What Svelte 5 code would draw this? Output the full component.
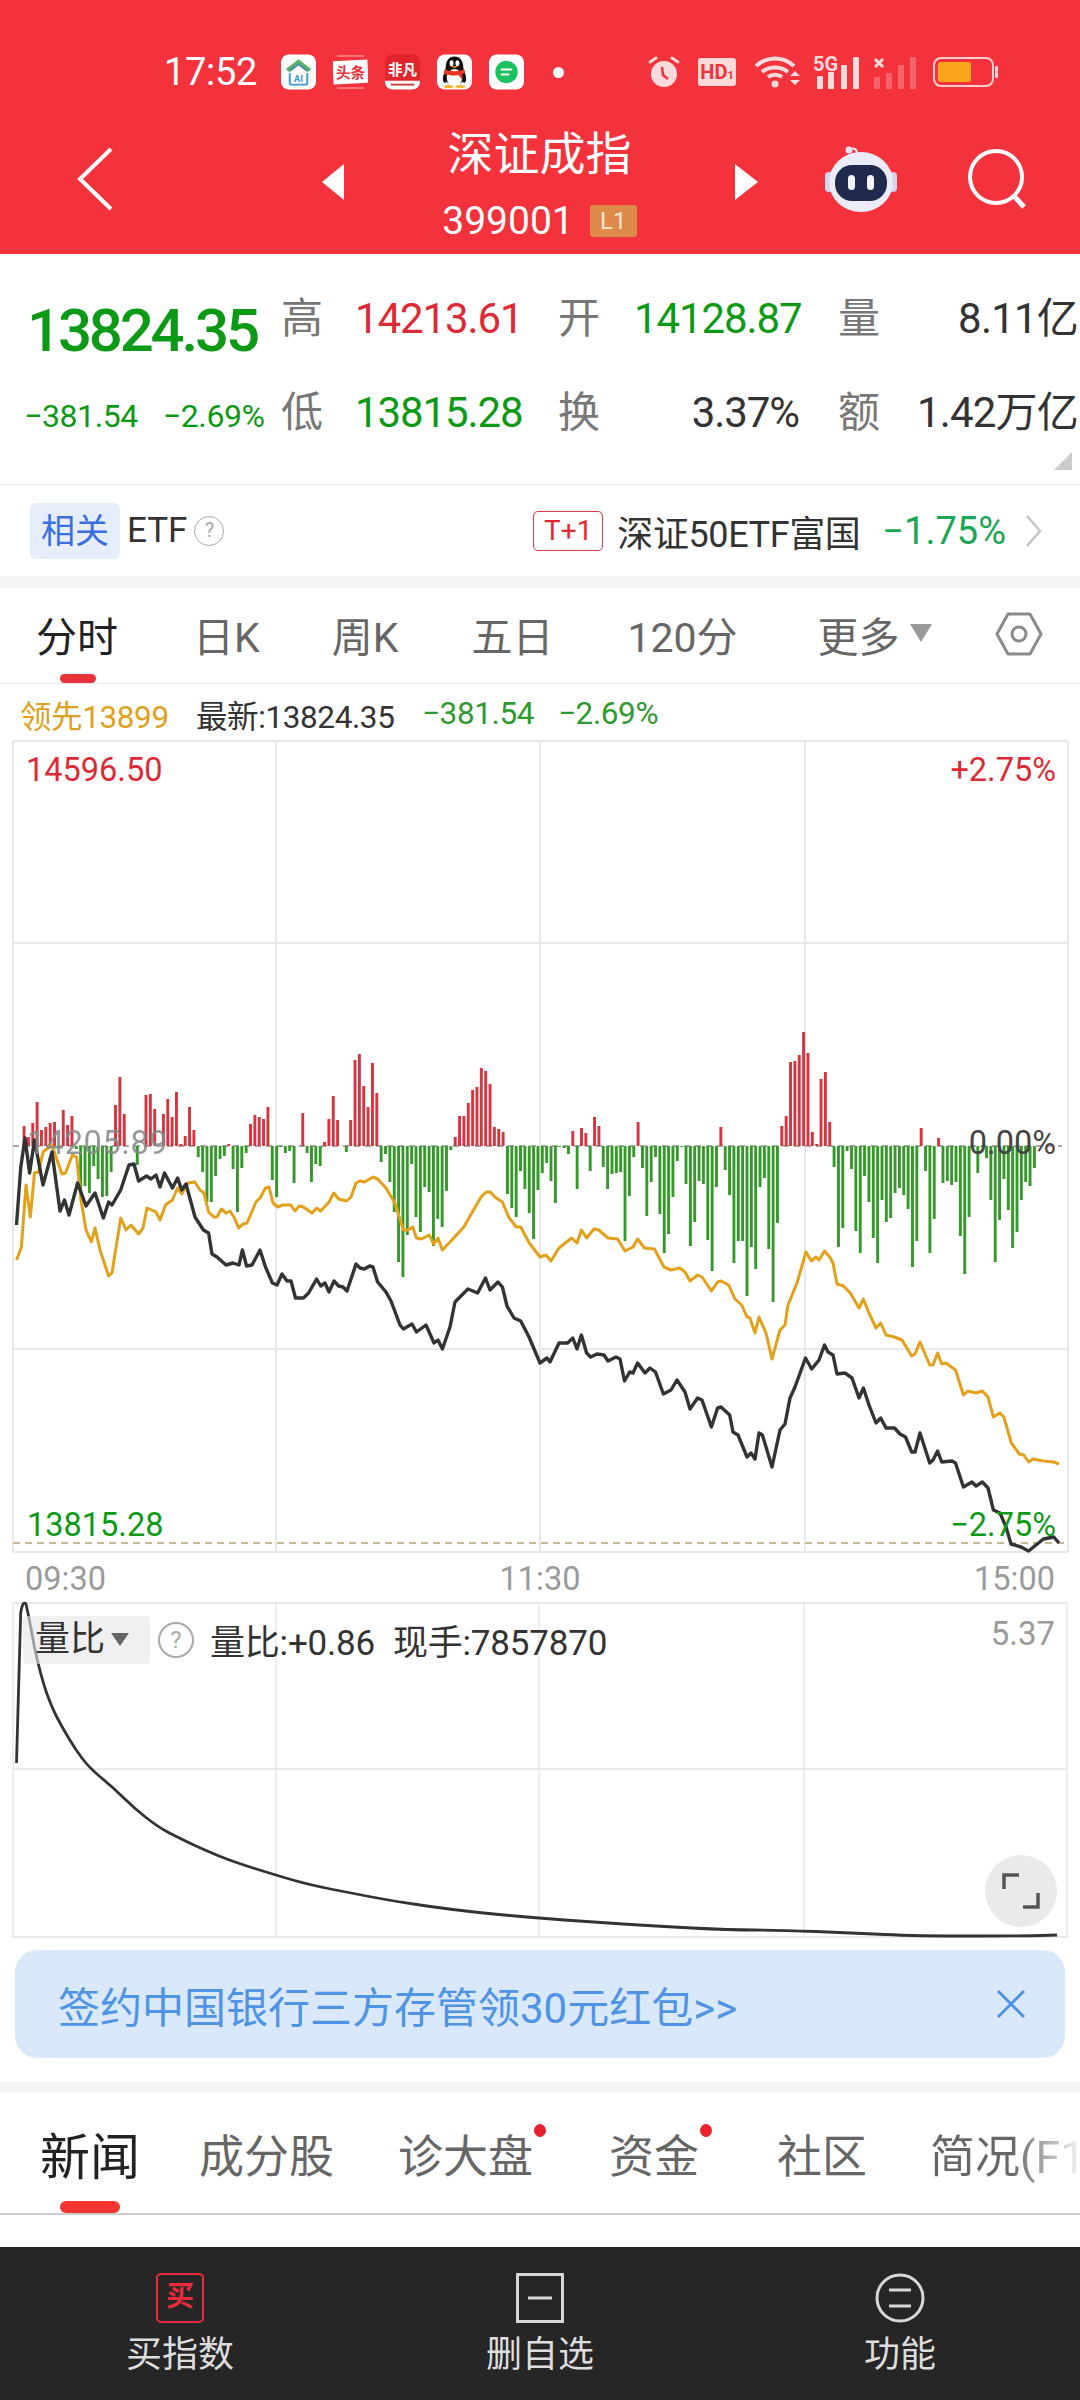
<script>
  // chart paths are in page px, the svg viewBox keeps the same numbers
  const black = [16.5,1225,20.7,1168,25,1138,29.6,1173,34.5,1140,43,1185,52,1152,60,1211,64.5,1200,69,1215,77.6,1183,86,1206,95,1193,103.4,1218,108.6,1202,112,1205,120.7,1190,129,1165,134,1164,138.6,1181,146.6,1176,151,1179,156,1175,160,1187,164.5,1173,172.4,1188,177.6,1178,181.7,1190,186,1184,195,1217,203.4,1230,208.6,1233,212,1254,217,1257,226,1265,233,1263,239,1265,242.4,1250,246.6,1266,252,1265,260,1250,265.5,1267,272.4,1283,277,1285,282,1274,287,1281,291,1281,295.5,1298,303.4,1298,308.6,1293,316.6,1279,320.7,1286,325,1283,329,1292,334,1281,338.6,1286,343,1287,347,1291,356,1264,360,1268,364.5,1269,369.6,1266,373,1267,377.6,1282,386,1292,391,1301,400,1325,403.4,1329,412,1324,416.5,1332,426,1325,434,1343,438,1340,442.4,1349,450,1327,455,1302,460,1297,468,1289,477.6,1293,485.5,1278,490,1290,498,1282,502.4,1287,507,1306,514,1318,520.7,1321,529,1337,540,1363,547,1358,550,1362,559,1343,567.6,1343,572.8,1338,577,1349,581.4,1335,586.6,1353,590.7,1357,597,1354,604,1355,608,1361,616,1357,620,1359,624.5,1381,629.7,1372,633,1373,637.6,1363,645,1373,650,1368,655.5,1372,663.4,1394,671,1390,677,1380,685,1392,690,1409,697.6,1398,702,1400,711.4,1427,717.6,1408,721,1407,729.7,1415,733,1432,738,1435,747,1457,751,1453,755,1459,759,1433,762.4,1435,772,1467,780,1430,785,1424,790,1398,795,1387,805.5,1358,811.7,1369,819,1360,824.5,1345,828,1352,833,1355,837,1374,845,1373,852,1378,859,1398,863.4,1388,869,1405,876,1423,880.7,1418,886,1428,894.5,1428,900,1434,905.5,1437,911.7,1452,915,1452,920,1433,929.7,1463,933,1460,937.6,1451,941.7,1462,952,1461,955.5,1463,963.4,1487,972,1482,976,1486,982.4,1482,988,1488,993.4,1510,1000,1513,1006,1527,1011,1544,1021,1547,1028.6,1551,1034.8,1546,1043.4,1539,1053.8,1537,1059,1543];
  const orange = [16.5,1260,21.4,1247,26,1185,30.3,1217,34.5,1173,38.6,1172,43,1152,52,1145,57,1160,62,1174,65.5,1173,72.4,1155,76.6,1157,81,1200,86,1230,91.4,1242,95,1228,100,1250,108.6,1276,112,1273,120.7,1218,126,1230,131,1225,138.6,1234,143,1228,147,1208,156,1212,160,1220,165.5,1205,172.4,1200,177.6,1188,181.7,1194,188,1183,194.8,1182,200,1190,204,1193,208.6,1212,213.8,1217,217,1217,221.4,1209,226,1213,230,1211,234.5,1218,238.6,1228,243,1224,247,1223,256,1202,260,1198,265.5,1188,269,1187,273,1203,277.6,1207,282.8,1205,290.7,1205,295,1211,299.3,1206,303.4,1207,312,1213,316.6,1208,320.7,1211,329,1202,333.8,1193,338.6,1199,346.6,1201,351,1197,356,1183,360,1181,364.5,1182,373,1177,377.6,1179,386,1188,394.8,1203,403.4,1230,408,1230,412.8,1227,416.5,1238,421.4,1239,429.3,1235,433.8,1244,438,1238,442.4,1250,450,1242,463.8,1227,481,1197,486.2,1192,490.3,1192,494.8,1197,502.4,1202,508.6,1217,516.2,1227,520.7,1227,529.3,1243,540,1257,546,1255,551,1261,559,1248,571.7,1238,577,1243,581.4,1230,586.6,1238,594,1229,598.6,1230,608,1238,617.6,1239,625,1251,633,1247,637.6,1239,644.5,1248,654.5,1249,664,1267,671,1270,679.7,1268,685,1272,690,1281,697.6,1275,702,1277,711.4,1291,717.6,1282,721,1281,728.6,1285,735,1299,741.7,1305,747,1317,750,1318,755,1333,759,1317,766,1333,772,1359,780,1330,785,1325,788,1305,797,1283,806,1252,811.4,1261,816,1257,819,1260,824.5,1251,829.7,1257,833,1263,837,1284,843.4,1286,850.3,1293,859,1308,863.4,1299,869,1313,876,1328,880.7,1323,886,1335,894.5,1337,902,1340,911.7,1356,915,1354,920,1342,929.7,1365,933,1365,937.6,1353,941.7,1364,946,1363,955.5,1370,963.4,1395,967.6,1391,976,1393,982.4,1391,988,1397,993.4,1417,1000,1413,1003.8,1417,1011.4,1443,1019.3,1454,1023.8,1455,1028.6,1462,1033,1459,1043.4,1461,1053.8,1462,1059,1464];
  const ratio = [34.4,1647,41,1677,51.6,1707,62,1727,75.8,1750,89.5,1768,113.6,1788,134,1808,158,1827,179,1838,206.6,1851,234,1862,275.5,1875,310,1885,351,1893,392.5,1901,440.8,1908,482,1913,537,1918,592,1922,654,1926,730,1930,778,1930,854,1933,916,1936,1026,1936,1057,1935];
  // signed bar heights in px from the zero line, one per minute
  const bars = [20,9,23,44,16,19,23,24,-2,36,21,30,-3,-47,-40,-47,-20,-33,-51,-50,-26,41,69,32,0,0,-19,0,51,52,37,0,32,47,29,54,2,10,39,16,-11,-26,-56,-56,-30,-13,-10,2,-23,-66,-22,-7,22,31,29,27,39,-34,-51,-1,-7,-5,-37,0,33,-7,-36,-18,-20,4,27,50,26,0,-6,26,86,92,60,39,83,53,-16,-8,-36,-66,-116,-131,-89,-18,-71,-86,-41,-46,-100,-73,-81,-45,-4,9,30,30,43,56,59,78,75,62,19,17,14,-48,-62,-71,-25,-43,-67,-93,-44,-27,-17,-35,-57,-1,-2,-8,15,-43,18,13,-25,29,20,-21,-43,-28,-27,-26,-95,-50,-11,24,-22,-70,-36,-11,-68,-107,-88,-51,-15,-1,-38,-100,-76,-35,-38,-94,-125,-41,19,-24,-49,-117,-95,-95,-150,-101,-123,-41,-32,-103,-156,-77,20,30,84,85,91,114,93,14,2,67,74,24,-21,-101,-82,-5,-23,-85,-107,-30,-56,-92,-117,-54,-76,-72,-47,-42,-49,-63,-121,-95,18,-25,-107,-73,8,-37,-35,-39,-36,-90,-128,-71,-1,-27,-1,-12,-54,-116,-74,-33,-64,-102,-86,-54,-36,-40,-22];
  const zero = 1146;
  const pts = (a) => {
    let s = '';
    for (let i = 0; i < a.length; i += 2) s += a[i] + ',' + a[i + 1] + ' ';
    return s;
  };
  // the ratio curve is smooth, so run it through the midpoints
  const smooth = (a) => {
    let d = 'M16.5 1763L20.7 1613Q22.7 1600 26 1604Q30 1622 ' + a[0] + ' ' + a[1];
    for (let i = 2; i < a.length - 2; i += 2) {
      const mx = (a[i] + a[i + 2]) / 2;
      const my = (a[i + 1] + a[i + 3]) / 2;
      d += 'Q' + a[i] + ' ' + a[i + 1] + ' ' + mx + ' ' + my;
    }
    return d + 'L1057 1935';
  };
  const gridX = [13, 276, 540, 805, 1068];
  const gridY = [741, 943, 1349, 1552];
  const ratioX = [13, 276, 539, 804, 1067];
  const appTabs = ['日K', '周K', '五日', '120分'];
</script>

<div class="page">
  <header class="head">
    <div class="status">
      <span class="time">17:52</span>
      <div class="apps">
        <svg class="app" viewBox="0 0 36 36">
          <rect width="36" height="36" rx="8" fill="#fff" />
          <path d="M5 15 L18 5 L31 15 L28 18 L18 10 L8 18Z" fill="#58b368" />
          <path d="M9 17 L18 10 L27 17" fill="none" stroke="#4a8fb0" stroke-width="2" />
          <path d="M9 19v10a2 2 0 0 0 2 2h14a2 2 0 0 0 2-2V19" fill="none" stroke="#3f9bd0" stroke-width="2" />
          <text x="18" y="28" class="ai">AI</text>
        </svg>
        <svg class="app" viewBox="0 0 36 36">
          <rect width="36" height="36" rx="8" fill="#f3323b" />
          <rect x="0" y="6" width="36" height="24" fill="#fff" transform="rotate(-3 18 18)" />
          <rect x="4" y="1" width="28" height="1" fill="#fbb" />
          <rect x="4" y="34" width="28" height="1" fill="#fbb" />
          <text x="18" y="24" class="tt">头条</text>
        </svg>
        <svg class="app" viewBox="0 0 36 36">
          <rect width="36" height="36" rx="8" fill="#e0262c" />
          <path d="M0 27h36v1a8 8 0 0 1-8 8H8a8 8 0 0 1-8-8z" fill="#fff" />
          <text x="18" y="21" class="fc">非凡</text>
          <rect x="6" y="30" width="24" height="2" fill="#c44" />
        </svg>
        <svg class="app" viewBox="0 0 36 36">
          <rect width="36" height="36" rx="8" fill="#fff" />
          <path d="M18 2c-6 0-9 5-9 11 0 3-3 7-3 12 0 4 2 5 4 3 2 4 14 4 16 0 2 2 4 1 4-3 0-5-3-9-3-12 0-6-3-11-9-11z" fill="#111" />
          <ellipse cx="18" cy="24" rx="8" ry="9" fill="#fff" />
          <path d="M8 15c5 3 15 3 20 0l1 4-3 1v6l-4-5c-4 1-8 1-12-1l-3 1z" fill="#e32" />
          <ellipse cx="15" cy="9" rx="2" ry="3" fill="#fff" />
          <ellipse cx="21" cy="9" rx="2" ry="3" fill="#fff" />
          <path d="M14 12h8l-4 2z" fill="#fa0" />
          <ellipse cx="12" cy="33" rx="5" ry="1.6" fill="#f5b52e" />
          <ellipse cx="24" cy="33" rx="5" ry="1.6" fill="#f5b52e" />
        </svg>
        <svg class="app" viewBox="0 0 36 36">
          <rect width="36" height="36" rx="8" fill="#fff" />
          <circle cx="18" cy="18" r="11.5" fill="#1cc25e" />
          <rect x="12" y="14.5" width="12" height="2" rx="1" fill="#fff" />
          <rect x="12" y="19.5" width="9" height="2" rx="1" fill="#fff" />
        </svg>
      </div>
      <span class="dot"></span>
      <div class="sys">
        <svg width="34" height="34" viewBox="0 0 34 34">
          <circle cx="17" cy="19" r="13" fill="#fcd9da" />
          <path d="M3 7l6-4M31 7l-6-4" stroke="#fcd9da" stroke-width="3" stroke-linecap="round" />
          <path d="M15 12l1 8 5 4" fill="none" stroke="#f3323b" stroke-width="2.5" />
        </svg>
        <div class="hd"><b>HD</b><small>1</small></div>
        <svg class="wifi" width="46" height="32" viewBox="0 0 46 32">
          <path d="M1 10C12 0 28 0 39 10M7 16c7-6 19-6 26 0M13 21c4-3 10-3 14 0" fill="none" stroke="#fcd9da" stroke-width="4" />
          <circle cx="20" cy="28" r="3.5" fill="#fcd9da" />
          <path d="M35 20l5 -5 5 5zM35 24l5 5 5-5z" fill="#fcd9da" />
        </svg>
        <svg class="sig" width="48" height="33" viewBox="0 0 48 33">
          <text x="0" y="15" class="fiveg">5G</text>
          <rect x="4" y="20" width="6" height="13" rx="1" fill="#fcd9da" />
          <rect x="15" y="16" width="6" height="17" rx="1" fill="#fcd9da" />
          <rect x="28" y="9" width="6" height="24" rx="1" fill="#fcd9da" />
          <rect x="40" y="1" width="6" height="32" rx="1" fill="#fcd9da" />
        </svg>
        <svg width="44" height="33" viewBox="0 0 44 33">
          <path d="M2 3l8 8M10 3l-8 8" stroke="#fcd9da" stroke-width="3" />
          <g fill="#fcd9da" opacity="0.3">
            <rect x="1" y="21" width="6" height="12" />
            <rect x="13" y="17" width="6" height="16" />
            <rect x="25" y="9" width="6" height="24" />
            <rect x="37" y="1" width="6" height="32" />
          </g>
        </svg>
        <svg class="batt" width="66" height="30" viewBox="0 0 66 30">
          <rect x="1" y="1" width="59" height="28" rx="7" fill="none" stroke="#fcd0d2" stroke-width="2" />
          <rect x="5" y="5" width="33" height="20" rx="3" fill="#fba61b" />
          <rect x="62" y="9" width="3" height="12" rx="1" fill="#fcd0d2" />
        </svg>
      </div>
    </div>
    <div class="nav">
      <svg class="back" width="36" height="64" viewBox="0 0 36 64">
        <path d="M34 2L3 32l31 30" fill="none" stroke="#fff" stroke-width="4" />
      </svg>
      <span class="tri left"></span>
      <div class="name">
        <div class="title">深证成指</div>
        <div class="code"><span>399001</span><span class="l1">L1</span></div>
      </div>
      <span class="tri right"></span>
      <svg class="robot" width="72" height="68" viewBox="0 0 72 68">
        <path d="M25 6c2-4 7-3 7 3" fill="none" stroke="#eee" stroke-width="2" />
        <circle cx="24" cy="5" r="3.5" fill="#e6e3f2" />
        <rect x="0" y="27" width="8" height="20" rx="4" fill="#d5d3ee" />
        <rect x="64" y="27" width="8" height="20" rx="4" fill="#d5d3ee" />
        <ellipse cx="36" cy="37" rx="32" ry="30" fill="#ecebf9" />
        <rect x="10" y="20" width="52" height="36" rx="17" fill="#1f2a4d" />
        <rect x="23" y="30" width="7" height="15" rx="3.5" fill="#f2f4fb" />
        <rect x="42" y="30" width="7" height="15" rx="3.5" fill="#f2f4fb" />
      </svg>
      <svg class="search" width="60" height="62" viewBox="0 0 60 62">
        <circle cx="28" cy="29" r="26" fill="none" stroke="#fff" stroke-width="4" />
        <path d="M46 48l10 11" stroke="#fff" stroke-width="5" />
      </svg>
    </div>
  </header>

  <section class="quote">
    <div class="main">
      <div class="price">13824.35</div>
      <div class="delta"><span>−381.54</span><span>−2.69%</span></div>
    </div>
    <div class="stats">
      <span class="k">高</span><span class="v red">14213.61</span>
      <span class="k">开</span><span class="v green r">14128.87</span>
      <span class="k">量</span><span class="v r">8.11亿</span>
      <span class="k">低</span><span class="v green">13815.28</span>
      <span class="k">换</span><span class="v r">3.37%</span>
      <span class="k">额</span><span class="v r">1.42万亿</span>
    </div>
    <span class="corner"></span>
  </section>

  <section class="etf">
    <span class="rel">相关</span>
    <span class="etf-name">ETF</span>
    <span class="help">?</span>
    <span class="t1">T+1</span>
    <span class="fund">深证50ETF富国</span>
    <span class="chg">−1.75%</span>
    <svg width="18" height="34" viewBox="0 0 18 34">
      <path d="M2 2l13 15L2 32" fill="none" stroke="#c4c4c4" stroke-width="2.5" />
    </svg>
  </section>

  <div class="gap"></div>

  <nav class="periods">
    <span class="on">分时</span>
    {#each appTabs as t}
      <span>{t}</span>
    {/each}
    <span class="more">更多<i></i></span>
    <svg class="gear" width="48" height="46" viewBox="0 0 48 46">
      <path d="M13 3h22l11 20-11 20H13L2 23z" fill="none" stroke="#8a8a8a" stroke-width="3" stroke-linejoin="round" />
      <circle cx="24" cy="23" r="7" fill="none" stroke="#8a8a8a" stroke-width="3" />
    </svg>
  </nav>

  <div class="info">
    <span class="lead">领先13899</span>
    <span class="now">最新:13824.35</span>
    <span class="green">−381.54</span>
    <span class="green">−2.69%</span>
  </div>

  <svg class="chart" width="1080" height="865" viewBox="0 735 1080 865">
    {#each gridX as x}
      <line x1={x} x2={x} y1="741" y2="1552" class="grid" />
    {/each}
    {#each gridY as y}
      <line x1="13" x2="1068" y1={y} y2={y} class="grid" />
    {/each}
    <line x1="13" x2="1062" y1={zero} y2={zero} class="zero" />
    <line x1="13" x2="1068" y1="1543" y2="1543" class="floor" />
    {#each bars as h, i}
      {#if h !== 0}
        <rect
          x={22.6 + i * 4.355}
          y={h > 0 ? zero - h : zero}
          width="2.9"
          height={Math.abs(h)}
          fill={h > 0 ? '#d8343f' : '#35992a'}
        />
      {/if}
    {/each}
    <polyline points={pts(orange)} class="l-orange" />
    <polyline points={pts(black)} class="l-black" />
    <text x="26" y="781" class="t c-red">14596.50</text>
    <text x="1056" y="781" class="t c-red end">+2.75%</text>
    <text x="27" y="1154" class="t pre">14205.89</text>
    <text x="1056" y="1154" class="t c-zero end">0.00%</text>
    <text x="27" y="1536" class="t c-green">13815.28</text>
    <text x="1056" y="1536" class="t c-green end">−2.75%</text>
    <text x="25" y="1590" class="t c-time">09:30</text>
    <text x="540" y="1590" class="t c-time mid">11:30</text>
    <text x="1055" y="1590" class="t c-time end">15:00</text>
  </svg>

  <div class="ratio">
    <svg width="1080" height="345" viewBox="0 1600 1080 345">
      {#each ratioX as x}
        <line x1={x} x2={x} y1="1603" y2="1937" class="grid thin" />
      {/each}
      <line x1="13" x2="1068" y1="1603" y2="1603" class="grid" />
      <line x1="13" x2="1068" y1="1769" y2="1769" class="grid" />
      <line x1="13" x2="1068" y1="1937" y2="1937" class="grid" />
      <path d={smooth(ratio)} class="l-ratio" />
    </svg>
    <div class="ratio-bar">
      <span class="pick">量比<i></i></span>
      <span class="help big">?</span>
      <span class="val">量比:+0.86</span>
      <span class="val">现手:7857870</span>
    </div>
    <span class="max">5.37</span>
    <button class="expand" aria-label="全屏">
      <svg width="38" height="38" viewBox="0 0 38 38">
        <path d="M2 17V3h15M36 21v14H21" fill="none" stroke="#555" stroke-width="3.5" />
      </svg>
    </button>
  </div>

  <div class="banner">
    <span>签约中国银行三方存管领30元红包&gt;&gt;</span>
    <svg width="30" height="30" viewBox="0 0 30 30">
      <path d="M2 2l26 26M28 2L2 28" stroke="#4f94e4" stroke-width="3" />
    </svg>
  </div>

  <div class="gap2"></div>

  <nav class="news">
    <span class="on">新闻</span>
    <span>成分股</span>
    <span class="badge">诊大盘</span>
    <span class="badge">资金</span>
    <span>社区</span>
    <span class="fade">简况(F10)</span>
  </nav>

  <footer class="foot">
    <div class="act">
      <span class="buy">买</span>
      <span>买指数</span>
    </div>
    <div class="act">
      <svg width="48" height="50" viewBox="0 0 48 50">
        <rect x="1.5" y="1.5" width="45" height="47" fill="none" stroke="#d8d8d8" stroke-width="3" />
        <path d="M12 25h24" stroke="#d8d8d8" stroke-width="3" />
      </svg>
      <span>删自选</span>
    </div>
    <div class="act">
      <svg width="50" height="50" viewBox="0 0 50 50">
        <circle cx="25" cy="25" r="23" fill="none" stroke="#d8d8d8" stroke-width="3" />
        <path d="M14 17h22M14 33h22" stroke="#d8d8d8" stroke-width="3" />
      </svg>
      <span>功能</span>
    </div>
  </footer>
</div>

<style>
  :global(body) {
    margin: 0;
    background: #fff;
  }

  .page {
    width: 1080px;
    height: 2400px;
    overflow: hidden;
    position: relative;
    font-family: Roboto, 'Noto Sans CJK SC', sans-serif;
    color: #333;
  }

  .head {
    height: 254px;
    background: #f3323b;
    color: #fff;
    box-sizing: border-box;
    padding-top: 54px;
  }

  .status {
    display: flex;
    align-items: center;
    height: 36px;
    padding-left: 164px;
  }

  .time {
    font-size: 38px;
    width: 117px;
    letter-spacing: -0.3px;
  }

  .apps {
    display: flex;
    gap: 17px;
  }

  .app {
    width: 35px;
    height: 36px;
    display: block;
  }

  .ai {
    font: 700 10px Roboto, sans-serif;
    fill: #3f9bd0;
    text-anchor: middle;
  }

  .tt {
    font: 700 15px 'Noto Sans CJK SC', sans-serif;
    fill: #e8313c;
    text-anchor: middle;
  }

  .fc {
    font: 700 15px 'Noto Sans CJK SC', sans-serif;
    fill: #fff;
    text-anchor: middle;
  }

  .dot {
    width: 11px;
    height: 11px;
    border-radius: 50%;
    background: #fff;
    margin-left: 29px;
  }

  .sys {
    display: flex;
    align-items: center;
    gap: 12px;
    margin-left: 83px;
  }

  .sig {
    overflow: visible;
  }

  .hd {
    width: 38px;
    height: 28px;
    border-radius: 3px;
    background: #fcd9da;
    color: #f3323b;
    font-size: 20px;
    line-height: 28px;
    text-align: center;
    white-space: nowrap;
    margin-left: 5px;
  }

  .wifi {
    margin-left: 7px;
  }

  .batt {
    margin-left: 4px;
  }

  .hd small {
    font-size: 11px;
    font-weight: 700;
  }

  .fiveg {
    font: 700 20px Roboto, sans-serif;
    fill: #fcd9da;
  }

  .nav {
    display: grid;
    grid-template-columns: 245px 22px 391px 23px 67px 72px 71px 60px;
    grid-template-rows: 110px;
    align-items: center;
    height: 110px;
    margin-top: 34px;
    padding-left: 77px;
    box-sizing: border-box;
    position: relative;
  }

  .back {
    grid-column: 1;
  }

  .tri {
    display: block;
    width: 0;
    height: 0;
    border-top: 18px solid transparent;
    border-bottom: 18px solid transparent;
    margin-top: 6px;
  }

  .tri.left {
    grid-column: 2;
    border-right: 22px solid #fff;
  }

  .tri.right {
    grid-column: 4;
    border-left: 23px solid #fff;
  }

  .name {
    grid-column: 3;
    text-align: center;
    align-self: start;
    margin-top: 1px;
  }

  .title {
    font-size: 46px;
    line-height: 58px;
  }

  .code {
    display: flex;
    align-items: center;
    justify-content: center;
    gap: 16px;
    font-size: 39px;
    line-height: 44px;
    margin-top: 16px;
  }

  .l1 {
    width: 47px;
    height: 32px;
    border-radius: 3px;
    background: #dd8a4a;
    color: #fde6d0;
    font-size: 24px;
    line-height: 32px;
    text-align: center;
  }

  .robot {
    grid-column: 6;
  }

  .search {
    grid-column: 8;
  }

  .quote {
    height: 231px;
    position: relative;
    display: flex;
    align-items: flex-start;
    box-sizing: border-box;
    padding-top: 38px;
    border-bottom: 1px solid #e6e6e6;
  }

  .main {
    width: 282px;
    padding-left: 27px;
    box-sizing: border-box;
    color: #0c9a16;
    flex: none;
  }

  .price {
    font-size: 60px;
    font-weight: 500;
    letter-spacing: -3.2px;
    line-height: 70px;
    margin-top: 4px;
  }

  .delta {
    display: flex;
    gap: 25px;
    font-size: 32px;
    letter-spacing: -0.4px;
    line-height: 40px;
    margin: 30px 0 0 -3px;
    white-space: nowrap;
  }

  .stats {
    display: grid;
    grid-template-columns: 73px 204px 75px 165px 40px 41px 200px;
    grid-template-rows: 50px 50px;
    row-gap: 44px;
    align-items: center;
    flex: none;
    width: 798px;
    margin-top: 2px;
  }

  .k {
    font-size: 42px;
    color: #777;
    line-height: 50px;
    margin-left: -1px;
  }

  .k:nth-child(3),
  .k:nth-child(9) {
    grid-column: 3;
  }

  .k:nth-child(5),
  .k:nth-child(11) {
    grid-column: 6;
  }

  .v {
    font-size: 42px;
    letter-spacing: -1.1px;
    line-height: 50px;
    white-space: nowrap;
  }

  .v.r {
    text-align: right;
  }

  .v:nth-child(6),
  .v:nth-child(12) {
    grid-column: 7;
    margin-right: 2px;
    color: #333;
    letter-spacing: -0.8px;
  }

  .red {
    color: #dc2a36;
  }

  .green {
    color: #0c9a16;
  }

  .corner {
    position: absolute;
    right: 8px;
    bottom: 14px;
    width: 0;
    height: 0;
    border-left: 18px solid transparent;
    border-bottom: 18px solid #ccc;
  }

  .etf {
    height: 91px;
    display: flex;
    align-items: center;
    padding: 0 37px 0 30px;
    font-size: 35px;
  }

  .rel {
    width: 90px;
    height: 56px;
    line-height: 56px;
    text-align: center;
    border-radius: 6px;
    background: #e6eefb;
    color: #3b6fe0;
    font-size: 34px;
  }

  .etf-name {
    margin-left: 7px;
    font-size: 35px;
  }

  .help {
    width: 30px;
    height: 30px;
    border: 1.5px solid #aaa;
    border-radius: 50%;
    color: #aaa;
    font-size: 20px;
    line-height: 27px;
    text-align: center;
    margin-left: 7px;
    flex: none;
    box-sizing: border-box;
  }

  .t1 {
    margin-left: auto;
    width: 70px;
    height: 40px;
    line-height: 38px;
    border: 1px solid #dc3a44;
    border-radius: 5px;
    color: #dc2a36;
    font-size: 28px;
    text-align: center;
    box-sizing: border-box;
  }

  .fund {
    margin-left: 14px;
    font-size: 36px;
    letter-spacing: -0.4px;
    white-space: nowrap;
  }

  .chg {
    margin-left: 22px;
    margin-right: 19px;
    font-size: 38px;
    color: #1ba655;
  }

  .gap {
    height: 12px;
    background: #f5f5f5;
  }

  .periods {
    height: 96px;
    box-sizing: border-box;
    border-bottom: 1px solid #e6e6e6;
    display: flex;
    align-items: center;
    padding: 0 37px 3px 36px;
    font-size: 41px;
    color: #666;
    position: relative;
  }

  .periods span {
    white-space: nowrap;
  }

  .periods span:nth-child(2) {
    margin-left: 75px;
  }

  .periods span:nth-child(3) {
    margin-left: 72px;
  }

  .periods span:nth-child(4) {
    margin-left: 73px;
  }

  .periods span:nth-child(5) {
    margin-left: 74px;
  }

  .periods .on {
    color: #222;
  }

  .periods .on::after {
    content: '';
    position: absolute;
    left: 60px;
    bottom: 0;
    width: 36px;
    height: 9px;
    border-radius: 5px;
    background: #e8323a;
  }

  .more {
    margin-left: 80px;
    display: flex;
    align-items: center;
  }

  .more i {
    width: 0;
    height: 0;
    margin-left: 10px;
    margin-top: -2px;
    border-left: 11px solid transparent;
    border-right: 11px solid transparent;
    border-top: 18px solid #999;
  }

  .gear {
    margin-left: auto;
    margin-top: -1px;
  }

  .info {
    height: 51px;
    display: flex;
    align-items: center;
    padding: 8px 0 0 20px;
    box-sizing: border-box;
    font-size: 31.5px;
    letter-spacing: -0.4px;
  }

  .lead {
    color: #e0a020;
    width: 176px;
  }

  .now {
    width: 226px;
  }

  .info .green {
    width: 136px;
    color: #2f9a2f;
  }

  .chart {
    display: block;
  }

  .grid {
    stroke: #e8e8e8;
    stroke-width: 2;
  }

  .grid.thin {
    stroke-width: 1.5;
  }

  .zero {
    stroke: #aaa;
    stroke-width: 2;
    stroke-dasharray: 6 5;
  }

  .floor {
    stroke: #c9b796;
    stroke-width: 2;
    stroke-dasharray: 7 5;
  }

  .l-orange,
  .l-black,
  .l-ratio {
    fill: none;
    stroke-linejoin: round;
  }

  .l-orange {
    stroke: #e3a11b;
    stroke-width: 3;
  }

  .l-black {
    stroke: #333;
    stroke-width: 3.4;
  }

  .l-ratio {
    stroke: #333;
    stroke-width: 2.8;
  }

  .t {
    font-size: 32.5px;
  }

  .end {
    text-anchor: end;
  }

  .mid {
    text-anchor: middle;
  }

  .c-red {
    fill: #dc2a36;
  }

  .c-green {
    fill: #0c9a16;
  }

  .c-time {
    fill: #9a9a9a;
  }

  .c-zero {
    fill: #444;
  }

  .pre {
    fill: #888;
    opacity: 0.85;
    letter-spacing: 0.6px;
  }

  .ratio {
    height: 345px;
    position: relative;
  }

  .ratio svg {
    display: block;
  }

  .ratio-bar {
    position: absolute;
    left: 23px;
    top: 14px;
    display: flex;
    align-items: center;
    font-size: 35px;
    color: #333;
  }

  .pick {
    width: 127px;
    height: 48px;
    line-height: 48px;
    background: rgba(230, 230, 230, 0.6);
    border-radius: 4px;
    padding-left: 12px;
    box-sizing: border-box;
    display: flex;
    align-items: center;
    gap: 6px;
  }

  .pick i {
    width: 0;
    height: 0;
    border-left: 9px solid transparent;
    border-right: 9px solid transparent;
    border-top: 13px solid #666;
  }

  .help.big {
    width: 36px;
    height: 36px;
    line-height: 32px;
    font-size: 24px;
    margin-left: 8px;
    margin-right: 16px;
    border-width: 2px;
  }

  .val {
    margin-right: 18px;
    letter-spacing: -0.2px;
  }

  .max {
    position: absolute;
    right: 25px;
    top: 14px;
    font-size: 33px;
    color: #9a9a9a;
  }

  .expand {
    position: absolute;
    left: 985px;
    top: 255px;
    width: 72px;
    height: 72px;
    padding: 0;
    border: 0;
    border-radius: 50%;
    background: rgba(225, 225, 225, 0.7);
    display: flex;
    align-items: center;
    justify-content: center;
  }

  .banner {
    height: 108px;
    margin: 5px 15px 0;
    padding: 0 39px 0 43px;
    border-radius: 22px;
    background: #d9e8fb;
    color: #4f94e4;
    font-size: 42px;
    display: flex;
    align-items: center;
    justify-content: space-between;
    white-space: nowrap;
  }

  .gap2 {
    height: 11px;
    margin-top: 24px;
    background: #f5f5f5;
  }

  .news {
    height: 122px;
    box-sizing: border-box;
    border-bottom: 2px solid #ccc;
    display: flex;
    align-items: center;
    padding: 0 0 0 40px;
    font-size: 45px;
    color: #666;
    position: relative;
    overflow: hidden;
    white-space: nowrap;
  }

  .news span {
    position: relative;
    flex: none;
  }

  .news span:nth-child(2) {
    margin-left: 59px;
  }

  .news span:nth-child(3) {
    margin-left: 64px;
  }

  .news span:nth-child(4) {
    margin-left: 76px;
  }

  .news span:nth-child(5) {
    margin-left: 78px;
  }

  .news span:nth-child(6) {
    margin-left: 63px;
  }

  .news .on {
    font-size: 50px;
    color: #222;
    position: static;
  }

  .news .on::after {
    content: '';
    position: absolute;
    left: 60px;
    bottom: 0;
    width: 60px;
    height: 12px;
    border-radius: 6px;
    background: #f5352f;
  }

  .badge::after {
    content: '';
    position: absolute;
    right: -13px;
    top: 3px;
    width: 12px;
    height: 13px;
    border-radius: 50%;
    background: #e8232e;
  }

  .fade {
    background: linear-gradient(90deg, #666 55%, #eee 100%);
    -webkit-background-clip: text;
    background-clip: text;
    color: transparent;
    width: 147px;
    overflow: hidden;
  }

  .foot {
    position: absolute;
    left: 0;
    right: 0;
    bottom: 0;
    height: 153px;
    background: #262626;
    color: #ddd;
    display: grid;
    grid-template-columns: repeat(3, 1fr);
    font-size: 36px;
  }

  .act {
    display: flex;
    flex-direction: column;
    align-items: center;
    padding-top: 26px;
    gap: 2px;
  }

  .act svg {
    display: block;
  }

  .buy {
    width: 44px;
    height: 46px;
    border: 2.5px solid #e82c3c;
    border-radius: 5px;
    color: #e82c3c;
    font-size: 28px;
    font-weight: 700;
    line-height: 44px;
    text-align: center;
    box-sizing: content-box;
  }
</style>
